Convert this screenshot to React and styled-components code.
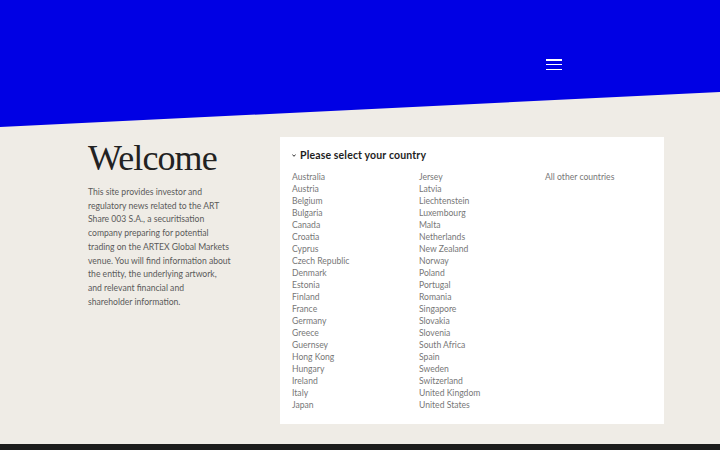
import React from 'react'
import styled, { createGlobalStyle } from 'styled-components'

const GlobalStyle = createGlobalStyle`
  html, body {
    margin: 0;
    padding: 0;
    background: #efece6;
    font-family: Lato, "Noto Sans", sans-serif;
  }
`

const countries = [
  ['Australia', 'Austria', 'Belgium', 'Bulgaria', 'Canada', 'Croatia', 'Cyprus', 'Czech Republic', 'Denmark', 'Estonia',
    'Finland', 'France', 'Germany', 'Greece', 'Guernsey', 'Hong Kong', 'Hungary', 'Ireland', 'Italy', 'Japan'],
  ['Jersey', 'Latvia', 'Liechtenstein', 'Luxembourg', 'Malta', 'Netherlands', 'New Zealand', 'Norway', 'Poland', 'Portugal',
    'Romania', 'Singapore', 'Slovakia', 'Slovenia', 'South Africa', 'Spain', 'Sweden', 'Switzerland', 'United Kingdom', 'United States'],
  ['All other countries'],
]

const Page = styled.div`
  min-height: 450px;
  display: flex;
  flex-direction: column;
`

const Header = styled.header`
  height: 127px;
  background: #0000e4;
  clip-path: polygon(0 0, 100% 0, 100% 92px, 0 100%);
  display: flex;
  justify-content: flex-end;
  padding: 59px 158px 0 0;
  box-sizing: border-box;
`

const MenuButton = styled.button`
  width: 16px;
  height: 11px;
  padding: 0;
  border: 0;
  background: transparent;
  display: flex;
  flex-direction: column;
  justify-content: space-between;
  cursor: pointer;

  span {
    display: block;
    height: 1.5px;
    background: #fff;
  }
`

const Main = styled.main`
  display: grid;
  grid-template-columns: 192px 384px;
  padding: 10px 0 20px 88px;
`

const Intro = styled.section`
  padding-top: 2px;
`

const Title = styled.h1`
  margin: 0;
  font-family: "Liberation Serif", serif;
  font-weight: 400;
  font-size: 36px;
  letter-spacing: -0.9px;
  line-height: 38px;
  color: #222;
`

const Text = styled.p`
  margin: 9px 0 0;
  font-size: 8.6px;
  line-height: 13.7px;
  color: #5a5a5a;
`

const Card = styled.section`
  background: #fff;
  height: 287px;
  box-sizing: border-box;
  padding: 12px 12px 0;
`

const CardTitle = styled.h2`
  margin: 0;
  display: flex;
  align-items: center;
  gap: 4px;
  font-size: 10.5px;
  font-weight: 700;
  letter-spacing: 0.15px;
  line-height: 12px;
  color: #1e1e1e;

  svg {
    width: 4px;
    height: 3px;
  }
`

const Columns = styled.div`
  margin-top: 10px;
  display: grid;
  grid-template-columns: 127px 126px 1fr;
`

const List = styled.ul`
  margin: 0;
  padding: 0;
  list-style: none;
`

const Item = styled.li`
  font-size: 8.6px;
  line-height: 12px;
  color: #777;
  cursor: pointer;
`

const Footer = styled.footer`
  margin-top: auto;
  height: 6px;
  background: #1c1c1c;
`

export default function App() {
  return (
    <Page>
      <GlobalStyle />
      <Header>
        <MenuButton aria-label="Menu">
          <span />
          <span />
          <span />
        </MenuButton>
      </Header>
      <Main>
        <Intro>
          <Title>Welcome</Title>
          <Text>
            This site provides investor and<br />
            regulatory news related to the ART<br />
            Share 003 S.A., a securitisation<br />
            company preparing for potential<br />
            trading on the ARTEX Global Markets<br />
            venue. You will find information about<br />
            the entity, the underlying artwork,<br />
            and relevant financial and<br />
            shareholder information.
          </Text>
        </Intro>
        <Card>
          <CardTitle>
            <svg viewBox="0 0 4 3">
              <path d="M0.4 0.5 L2 2.3 L3.6 0.5" fill="none" stroke="#1e1e1e" strokeWidth="0.9" />
            </svg>
            Please select your country
          </CardTitle>
          <Columns>
            {countries.map((col, i) => (
              <List key={i}>
                {col.map((name) => (
                  <Item key={name}>{name}</Item>
                ))}
              </List>
            ))}
          </Columns>
        </Card>
      </Main>
      <Footer />
    </Page>
  )
}
